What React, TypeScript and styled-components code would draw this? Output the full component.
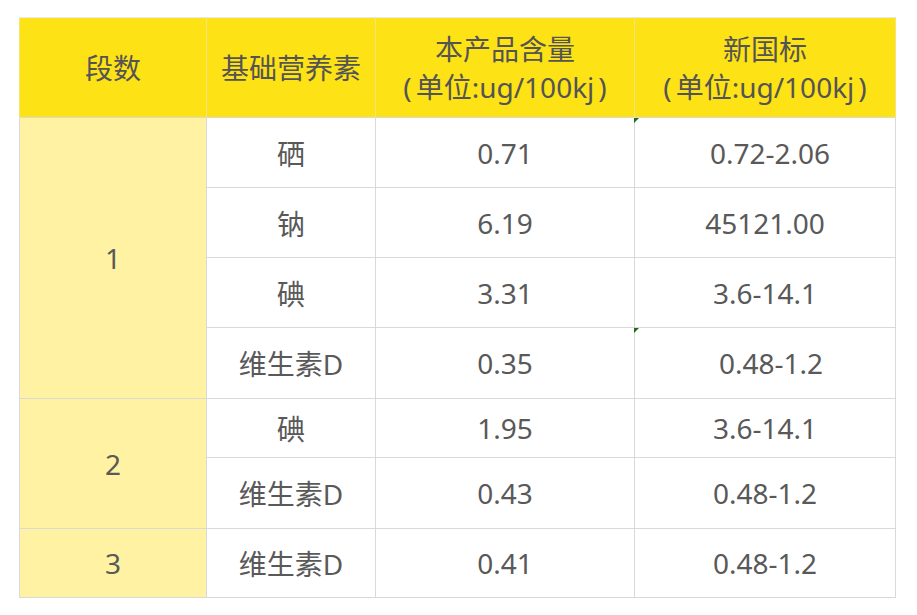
import React from 'react'
import styled, { createGlobalStyle } from 'styled-components'

const GlobalStyle = createGlobalStyle`
  html, body {
    margin: 0;
    padding: 0;
    background: #fff;
  }
  body {
    font-family: "Noto Sans", "Noto Sans CJK SC", sans-serif;
  }
`

const Page = styled.div`
  padding: 17px 0 0 19px;
`

const Table = styled.table`
  border-collapse: collapse;
  table-layout: fixed;
  width: 876px;
  color: #595959;
  font-size: 28px;
  border: 1px solid #d6d6d6;
`

const HeadCell = styled.th`
  background: #fde216;
  color: #545454;
  font-weight: 400;
  height: 99px;
  padding: 0;
  line-height: 38px;
  text-align: center;
  border: 1px solid #f2e57a;
  border-top-color: #e9e9e9;
  border-bottom: none;
`

const Paren = styled.span`
  margin: 0 4px;
`

const StageCell = styled.td`
  background: #fff2a3;
  text-align: center;
  padding: 0;
  border: 1px solid #d9d9d9;
`

const Cell = styled.td<{ $h: number; $nudge?: number }>`
  position: relative;
  height: ${p => p.$h - 1}px;
  padding: 0 0 0 ${p => p.$nudge ?? 0}px;
  text-align: center;
  border: 1px solid #d9d9d9;
`

// excel comment marker in the cell corner
const Marker = styled.span`
  position: absolute;
  left: -1px;
  top: 0;
  width: 0;
  height: 0;
  border-top: 5px solid #1f6b1f;
  border-right: 5px solid transparent;
`

type Row = { name: string; value: string; std: string; h: number; nudge?: number; mark?: boolean }
type Group = { stage: string; rows: Row[] }

const groups: Group[] = [
  {
    stage: '1',
    rows: [
      { name: '硒', value: '0.71', std: '0.72-2.06', h: 70, nudge: 10, mark: true },
      { name: '钠', value: '6.19', std: '45121.00', h: 70 },
      { name: '碘', value: '3.31', std: '3.6-14.1', h: 70 },
      { name: '维生素D', value: '0.35', std: '0.48-1.2', h: 71, nudge: 12, mark: true },
    ],
  },
  {
    stage: '2',
    rows: [
      { name: '碘', value: '1.95', std: '3.6-14.1', h: 59 },
      { name: '维生素D', value: '0.43', std: '0.48-1.2', h: 71 },
    ],
  },
  {
    stage: '3',
    rows: [{ name: '维生素D', value: '0.41', std: '0.48-1.2', h: 69 }],
  },
]

const Unit = () => (
  <>
    <Paren>(</Paren>单位:ug/100kj<Paren>)</Paren>
  </>
)

const App = () => {
  return (
    <Page>
      <GlobalStyle />
      <Table>
        <colgroup>
          <col style={{ width: 187 }} />
          <col style={{ width: 169 }} />
          <col style={{ width: 259 }} />
          <col style={{ width: 261 }} />
        </colgroup>
        <thead>
          <tr>
            <HeadCell>段数</HeadCell>
            <HeadCell>基础营养素</HeadCell>
            <HeadCell>本产品含量<br /><Unit /></HeadCell>
            <HeadCell>新国标<br /><Unit /></HeadCell>
          </tr>
        </thead>
        <tbody>
          {groups.map(g =>
            g.rows.map((r, i) => (
              <tr key={g.stage + i}>
                {i === 0 && <StageCell rowSpan={g.rows.length}>{g.stage}</StageCell>}
                <Cell $h={r.h}>{r.name}</Cell>
                <Cell $h={r.h}>{r.value}</Cell>
                <Cell $h={r.h} $nudge={r.nudge}>
                  {r.mark && <Marker />}
                  {r.std}
                </Cell>
              </tr>
            ))
          )}
        </tbody>
      </Table>
    </Page>
  )
}

export default App
